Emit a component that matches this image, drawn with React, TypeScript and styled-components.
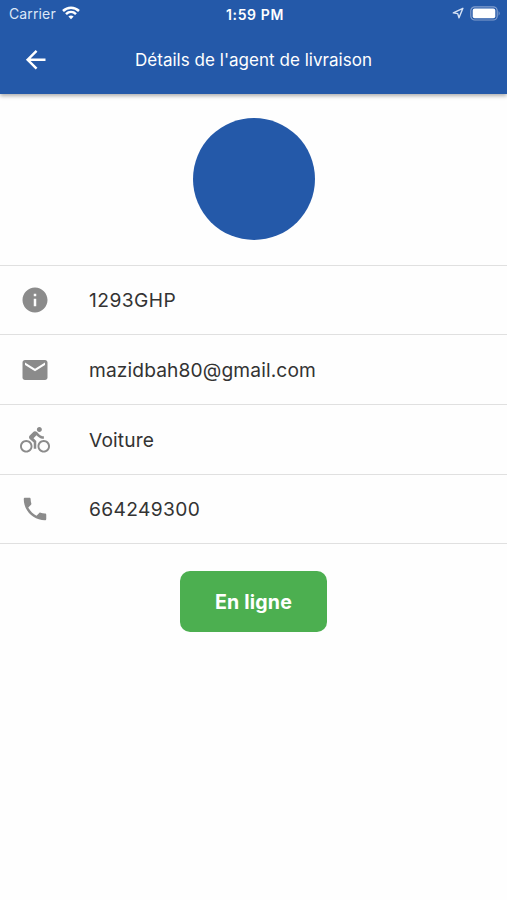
import React from "react";
import styled, { createGlobalStyle } from "styled-components";
import type { IconType } from "react-icons";
import { MdArrowBack, MdDirectionsBike, MdEmail, MdInfo, MdPhone } from "react-icons/md";

const GlobalStyle = createGlobalStyle`
  * { box-sizing: border-box; }
  body { margin: 0; background: #fefefe; font-family: Inter, Roboto, sans-serif; }
`;

const Screen = styled.div`
  display: flex;
  flex-direction: column;
  min-height: 900px;
  background: #fefefe;
  overflow: hidden;
`;

const Header = styled.header`
  height: 93.5px;
  background: #2459a9;
  color: #fff;
  box-shadow: 0 2px 4px rgba(0, 0, 0, 0.32);
`;

const StatusBar = styled.div`
  display: grid;
  grid-template-columns: 1fr auto 1fr;
  align-items: center;
  height: 26px;
  padding: 0 6px 0 9px;
`;

const Carrier = styled.div`
  display: flex;
  align-items: center;
  gap: 6px;
  color: #dce7f7;
  font-size: 14px;
  letter-spacing: 0.13px;
`;

const Clock = styled.div`
  padding-top: 2px;
  font-weight: 600;
  font-size: 14px;
  letter-spacing: 0.6px;
`;

const StatusIcons = styled.div`
  display: flex;
  align-items: center;
  justify-content: flex-end;
  gap: 6px;
`;

const AppBar = styled.div`
  display: grid;
  grid-template-columns: 70.4px 1fr 70.4px;
  align-items: center;
  height: 67.5px;
`;

const BackButton = styled.button`
  display: flex;
  justify-content: center;
  padding: 0;
  border: 0;
  background: none;
  color: #fff;
`;

const Title = styled.h1`
  margin: 0;
  text-align: center;
  font-size: 17px;
  font-weight: 400;
  letter-spacing: 0.03px;
  white-space: nowrap;
`;

const AvatarArea = styled.section`
  display: flex;
  justify-content: center;
  height: 171px;
  padding-top: 24.5px;
`;

const Avatar = styled.div`
  width: 122px;
  height: 122px;
  border-radius: 50%;
  background: #2459a9;
`;

const Details = styled.ul`
  margin: 0;
  padding: 0;
  list-style: none;
  border-top: 1.5px solid #e0e0e0;
`;

const Row = styled.li`
  display: grid;
  grid-template-columns: 70px 1fr;
  align-items: center;
  column-gap: 19px;
  height: 69.7px;
  padding-top: 0.6px;
  border-bottom: 1.5px solid #e0e0e0;
`;

const RowIcon = styled.span`
  display: flex;
  justify-content: center;
  color: #8b8b8b;
`;

const RowText = styled.span<{ $tracking: number }>`
  color: #333;
  font-size: 19.2px;
  letter-spacing: ${({ $tracking }) => $tracking}px;
`;

const StatusButton = styled.button`
  align-self: center;
  width: 147px;
  height: 61px;
  margin-top: 26.8px;
  padding: 1px 0 0;
  border: 0;
  border-radius: 10px;
  background: #4caf50;
  color: #fff;
  font-family: inherit;
  font-size: 19.6px;
  font-weight: 700;
  letter-spacing: 0.2px;
`;

interface Detail {
  icon: IconType;
  text: string;
  tracking: number;
}

const details: Detail[] = [
  { icon: MdInfo, text: "1293GHP", tracking: 0.45 },
  { icon: MdEmail, text: "mazidbah80@gmail.com", tracking: 0.12 },
  { icon: MdDirectionsBike, text: "Voiture", tracking: 0.15 },
  { icon: MdPhone, text: "664249300", tracking: 0.35 },
];

const WifiIcon = () => (
  <svg width="18" height="14" viewBox="0 0 18 14" fill="none" stroke="#fff" strokeWidth="2.5">
    <path d="M1 5C5.6 .6 12.4 .6 17 5" />
    <path d="M4 8.2C6.9 5.4 11.1 5.4 14 8.2" />
    <path d="M6.4 10.5Q9 8.3 11.6 10.5L9 13.3Z" fill="#fff" stroke="none" />
  </svg>
);

const LocationIcon = () => (
  <svg width="12" height="12" viewBox="0 0 12 12" fill="none" stroke="#d6e2f4" strokeWidth="1.4" strokeLinejoin="round">
    <path d="M10.9 1.3L1.3 5.9L5.7 6.6L7 10.8Z" />
  </svg>
);

const BatteryIcon = () => (
  <svg width="31" height="15" viewBox="0 0 31 15">
    <rect x=".8" y=".8" width="26.4" height="13.2" rx="4" fill="none" stroke="#839fce" strokeWidth="1.2" />
    <rect x="2.7" y="2.6" width="22.6" height="9.6" rx="2" fill="#fff" />
    <path d="M28.6 5Q30.8 7.4 28.6 9.8Z" fill="#839fce" />
  </svg>
);

export default function App() {
  return (
    <Screen>
      <GlobalStyle />
      <Header>
        <StatusBar>
          <Carrier>
            Carrier
            <WifiIcon />
          </Carrier>
          <Clock>1:59 PM</Clock>
          <StatusIcons>
            <LocationIcon />
            <BatteryIcon />
          </StatusIcons>
        </StatusBar>
        <AppBar>
          <BackButton aria-label="Retour">
            <MdArrowBack size={29.4} />
          </BackButton>
          <Title>Détails de l'agent de livraison</Title>
        </AppBar>
      </Header>
      <AvatarArea>
        <Avatar />
      </AvatarArea>
      <Details>
        {details.map(({ icon: Icon, text, tracking }) => (
          <Row key={text}>
            <RowIcon>
              <Icon size={30} />
            </RowIcon>
            <RowText $tracking={tracking}>{text}</RowText>
          </Row>
        ))}
      </Details>
      <StatusButton>En ligne</StatusButton>
    </Screen>
  );
}
